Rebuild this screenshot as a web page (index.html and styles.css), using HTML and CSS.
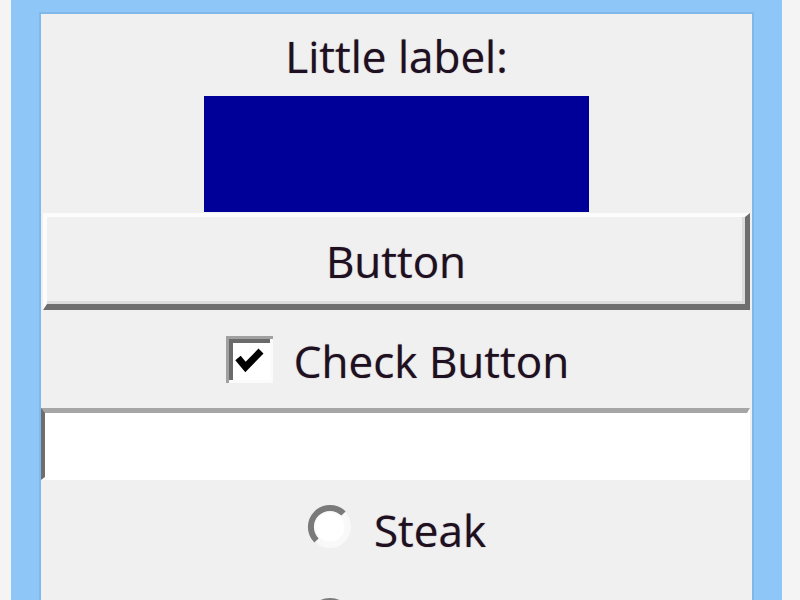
FILE: index.html
```html
<!DOCTYPE html>
<html lang="en">
<head>
<meta charset="utf-8">
<title>Tk widgets</title>
<link rel="stylesheet" href="styles.css">
</head>
<body>
<div class="window">
  <div class="content">
    <div class="label">Little label:</div>
    <div class="swatch"></div>
    <div class="button">Button</div>
    <div class="check-row">
      <svg class="checkbox" width="47" height="47" viewBox="0 0 47 47">
        <rect width="47" height="47" fill="#fbfbfb"/>
        <path d="M0 0H47V3H3V47H0Z" fill="#a0a0a0"/>
        <rect x="3" y="3" width="41" height="41" fill="#e6e6e6"/>
        <path d="M3 3H44V7H7V44H3Z" fill="#6b6b6b"/>
        <rect x="7" y="7" width="37" height="37" fill="#ffffff"/>
        <polyline points="12,22 19.5,31 35,15" fill="none" stroke="#000" stroke-width="7" stroke-linejoin="miter"/>
      </svg>
      <span class="check-text">Check Button</span>
    </div>
    <div class="entry"></div>
    <div class="radio-row">
      <svg class="radio" width="46" height="46" viewBox="0 0 46 46">
        <circle cx="23" cy="23" r="21" fill="#f9f9f9"/>
        <path d="M9.5 36.5 A19 19 0 0 1 36.5 9.5" fill="none" stroke="#7a7a7a" stroke-width="6"/>
        <circle cx="23" cy="23" r="14.5" fill="#ffffff"/>
      </svg>
      <span class="radio-text">Steak</span>
    </div>
    <div class="radio-row">
      <svg class="radio" width="46" height="46" viewBox="0 0 46 46">
        <circle cx="23" cy="23" r="21" fill="#f9f9f9"/>
        <path d="M9.5 36.5 A19 19 0 0 1 36.5 9.5" fill="none" stroke="#7a7a7a" stroke-width="6"/>
        <circle cx="23" cy="23" r="14.5" fill="#ffffff"/>
      </svg>
      <span class="radio-text radio-blank"></span>
    </div>
  </div>
</div>
</body>
</html>
```
FILE: styles.css
```css
html, body {
  margin: 0;
  padding: 0;
}

body {
  width: 800px;
  height: 600px;
  overflow: hidden;
  background: #f4f4f4;
  font-family: "Open Sans", "Noto Sans", "DejaVu Sans", sans-serif;
  font-size: 44px;
  color: #1e1020;
}

.window {
  margin-left: 11px;
  width: 771px;
  height: 600px;
  box-sizing: border-box;
  border-style: solid;
  border-color: #8ec6f8;
  border-width: 14px 30px 0 30px;
  box-shadow: inset 2px 0 0 #78aedf, inset -2px 0 0 #78aedf, inset 0 2px 0 #78aedf;
}

.content {
  height: 100%;
  overflow: hidden;
  background: #f0f0f0;
  box-shadow: 0 0 0 2px #80b8ea;
  display: flex;
  flex-direction: column;
  align-items: center;
  text-shadow: 0 0 1px rgba(50, 20, 50, 0.55);
}

.content > * {
  flex: none;
}

.label {
  margin-top: 12px;
  height: 60px;
  line-height: 60px;
  white-space: nowrap;
}

.swatch {
  margin-top: 10px;
  width: 385px;
  height: 116px;
  background: #000099;
}

.button {
  align-self: stretch;
  margin: 1px 2px 0 2px;
  height: 97px;
  box-sizing: border-box;
  border-style: solid;
  border-width: 4px 5px 6px 4px;
  border-color: #fcfcfc #6e6e6e #6e6e6e #fcfcfc;
  box-shadow: inset -3px -3px 0 #dcdcdc;
  display: flex;
  align-items: center;
  justify-content: center;
  line-height: 60px;
  padding-top: 1px;
}

.check-row {
  align-self: stretch;
  height: 98px;
  display: flex;
  align-items: center;
  justify-content: center;
  gap: 21px;
}

.checkbox {
  display: block;
  flex: none;
  margin-left: 2px;
}

.check-text {
  line-height: 60px;
  margin-top: 4px;
  white-space: nowrap;
}

.entry {
  align-self: stretch;
  margin-right: 2px;
  height: 72px;
  box-sizing: border-box;
  background: #ffffff;
  border-style: solid;
  border-width: 5px 3px 3px 4px;
  border-color: #a6a6a6 #ffffff #ffffff #6e6e6e;
}

.radio-row {
  align-self: stretch;
  height: 93px;
  display: flex;
  align-items: center;
  justify-content: center;
  gap: 21px;
}

.radio {
  display: block;
  flex: none;
}

.radio-text {
  line-height: 60px;
  margin-top: 6px;
  white-space: nowrap;
}

.radio-blank {
  width: 112px;
  height: 60px;
}
```
